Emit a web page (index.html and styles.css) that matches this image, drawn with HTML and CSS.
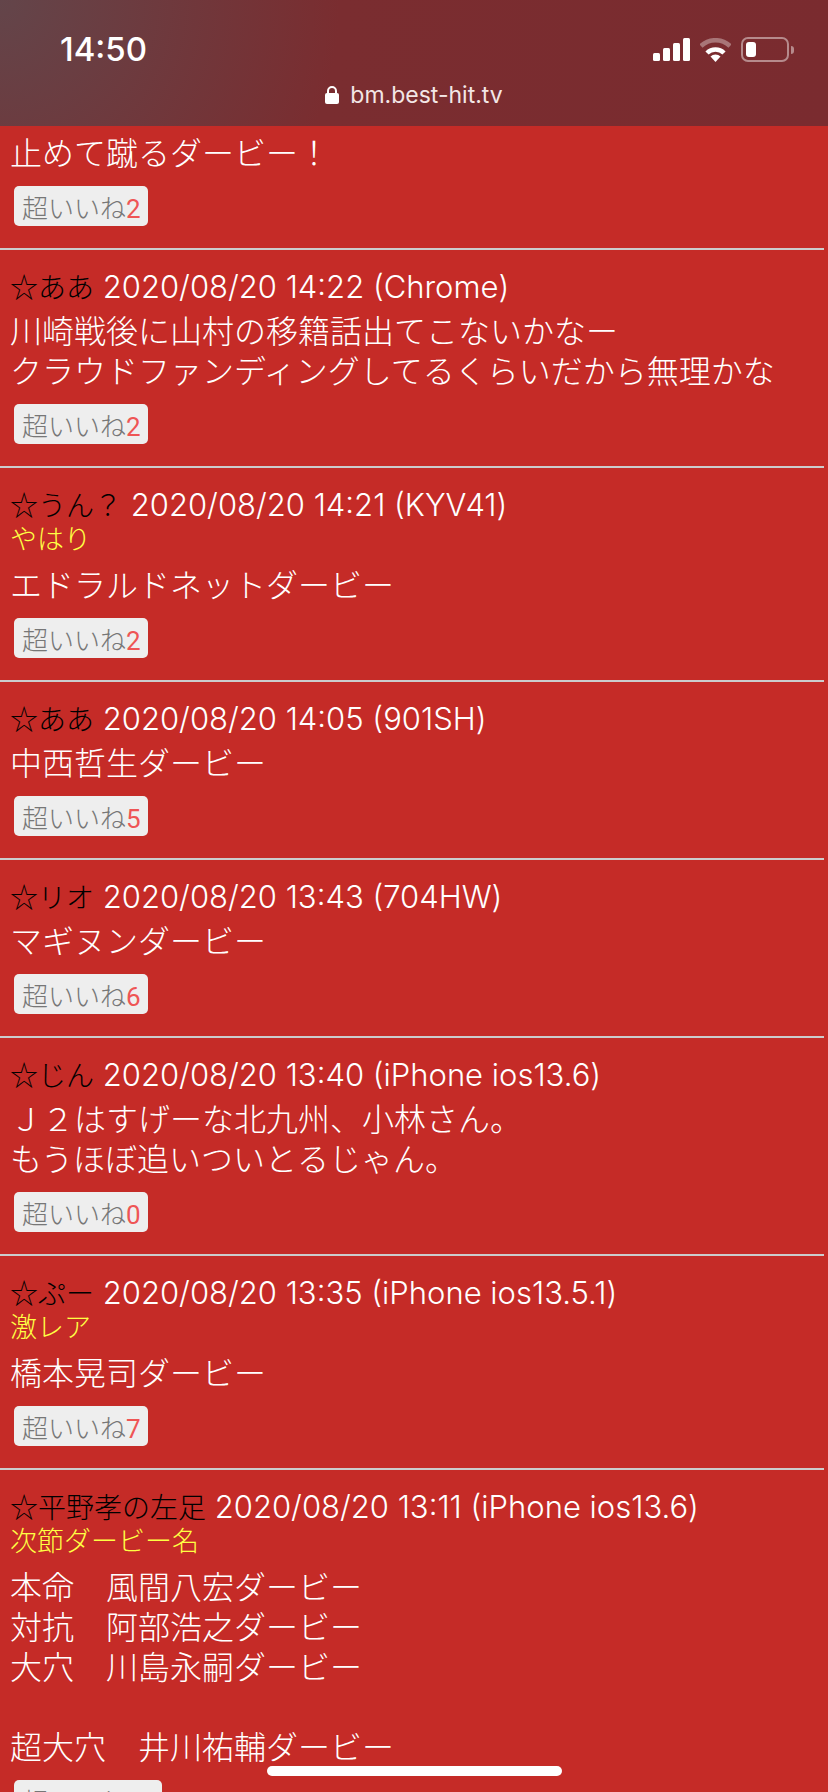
FILE: index.html
```html
<!DOCTYPE html>
<html lang="ja">

<head>
    <meta charset="UTF-8">
    <meta name="viewport" content="width=device-width, initial-scale=1.0">
    <title>bm.best-hit.tv</title>
    <link rel="stylesheet" href="styles.css">
</head>

<body>
    <header class="topbar">
        <div class="status">
            <span class="time">14:50</span>
            <div class="status-icons">
                <svg class="signal" width="37" height="23" viewBox="0 0 37 23">
                    <rect x="0" y="15" width="7" height="8" rx="1.5" />
                    <rect x="10" y="10" width="7" height="13" rx="1.5" />
                    <rect x="20" y="5" width="7" height="18" rx="1.5" />
                    <rect x="30" y="0" width="7" height="23" rx="1.5" />
                </svg>
                <svg class="wifi" width="31" height="24" viewBox="0 0 31 24">
                    <path d="M1 8 A21 21 0 0 1 30 8" fill="none" stroke="#fff" stroke-opacity=".35" stroke-width="4.5" />
                    <path d="M7 15 A12 12 0 0 1 24 15" fill="none" stroke="#fff" stroke-width="4.5" />
                    <path d="M15.5 24 L10.5 18.6 A7 7 0 0 1 20.5 18.6 Z" fill="#fff" />
                </svg>
                <div class="battery">
                    <div class="battery-body"><div class="battery-level"></div></div>
                    <div class="battery-nub"></div>
                </div>
            </div>
        </div>
        <div class="address">
            <svg class="lock" width="14" height="18" viewBox="0 0 14 18">
                <path d="M3 8 V5 a4 4 0 0 1 8 0 V8" fill="none" stroke="#fff" stroke-width="2" />
                <rect x="0" y="7" width="14" height="11" rx="2" fill="#fff" />
            </svg>
            <span>bm.best-hit.tv</span>
        </div>
    </header>

    <main>
        <div class="item item-cut">
            <p class="comment">止めて蹴るダービー！</p>
            <button class="like">超いいね<span class="count">2</span></button>
        </div>
        <hr>
        <div class="item">
            <p class="meta"><span class="name">☆ああ</span> 2020/08/20 14:22 (Chrome)</p>
            <p class="comment">川崎戦後に山村の移籍話出てこないかなー<br>クラウドファンディングしてるくらいだから無理かな</p>
            <button class="like">超いいね<span class="count">2</span></button>
        </div>
        <hr>
        <div class="item">
            <p class="meta"><span class="name">☆うん？</span> 2020/08/20 14:21 (KYV41)</p>
            <p class="title">やはり</p>
            <p class="comment">エドラルドネットダービー</p>
            <button class="like">超いいね<span class="count">2</span></button>
        </div>
        <hr>
        <div class="item">
            <p class="meta"><span class="name">☆ああ</span> 2020/08/20 14:05 (901SH)</p>
            <p class="comment">中西哲生ダービー</p>
            <button class="like">超いいね<span class="count">5</span></button>
        </div>
        <hr>
        <div class="item">
            <p class="meta"><span class="name">☆リオ</span> 2020/08/20 13:43 (704HW)</p>
            <p class="comment">マギヌンダービー</p>
            <button class="like">超いいね<span class="count">6</span></button>
        </div>
        <hr>
        <div class="item">
            <p class="meta"><span class="name">☆じん</span> 2020/08/20 13:40 (iPhone ios13.6)</p>
            <p class="comment">Ｊ２はすげーな北九州、小林さん。<br>もうほぼ追いついとるじゃん。</p>
            <button class="like">超いいね<span class="count">0</span></button>
        </div>
        <hr>
        <div class="item">
            <p class="meta"><span class="name">☆ぷー</span> 2020/08/20 13:35 (iPhone ios13.5.1)</p>
            <p class="title">激レア</p>
            <p class="comment">橋本晃司ダービー</p>
            <button class="like">超いいね<span class="count">7</span></button>
        </div>
        <hr>
        <div class="item">
            <p class="meta"><span class="name">☆平野孝の左足</span> 2020/08/20 13:11 (iPhone ios13.6)</p>
            <p class="title">次節ダービー名</p>
            <p class="comment">本命　風間八宏ダービー<br>対抗　阿部浩之ダービー<br>大穴　川島永嗣ダービー<br><br>超大穴　井川祐輔ダービー</p>
            <button class="like">超いいね<span class="count">10</span></button>
        </div>
    </main>

    <div class="home-bar"></div>
</body>

</html>
```

FILE: styles.css
```css
* {
    box-sizing: border-box;
}

html,
body {
    margin: 0;
    height: 1792px;
    overflow: hidden;
}

body {
    position: relative;
    background-color: #c52b27;
    color: #fff;
    font-family: Roboto, "Noto Sans CJK JP", sans-serif;
    font-weight: 300;
}

.topbar {
    height: 126px;
    background: radial-gradient(circle at 0 0, #63454a 0, #7a2d30 340px, #7a2b2f 100%);
}

.status {
    display: flex;
    justify-content: space-between;
    align-items: center;
    padding: 37px 34px 0 60px;
}

.time {
    font-family: Inter, sans-serif;
    font-size: 33px;
    font-weight: 500;
    line-height: 25px;
}

.status-icons {
    display: flex;
    align-items: center;
    gap: 10px;
}

.signal {
    fill: #fff;
}

.battery {
    display: flex;
    align-items: center;
    gap: 2px;
}

.battery-body {
    width: 48px;
    height: 25px;
    padding: 3px;
    border: 2px solid rgba(255, 255, 255, 0.45);
    border-radius: 7px;
}

.battery-level {
    width: 10px;
    height: 100%;
    background-color: #fff;
    border-radius: 3px;
}

.battery-nub {
    width: 3px;
    height: 8px;
    background-color: rgba(255, 255, 255, 0.45);
    border-radius: 0 3px 3px 0;
}

.address {
    display: flex;
    justify-content: center;
    align-items: center;
    gap: 11px;
    margin-top: 19px;
    color: #f3e6e6;
    font-family: Inter, sans-serif;
    font-size: 23px;
    font-weight: 400;
    line-height: 28px;
}

hr {
    width: 824px;
    height: 2px;
    margin: 0;
    border: 0;
    background-color: #ccc;
}

.item {
    padding: 20px 10px 22px;
}

.item-cut {
    padding-top: 8px;
}

.meta {
    height: 34px;
    margin: 0;
    font-family: Inter, "Noto Sans CJK JP", sans-serif;
    font-size: 31px;
    line-height: 33px;
}

.name {
    color: #000;
    font-family: "Noto Sans CJK JP", sans-serif;
    font-size: 28px;
    line-height: 1;
}

.title {
    margin: 0;
    color: #ff4;
    font-size: 27px;
    line-height: 36px;
}

.comment {
    margin: 8px 0 0;
    font-size: 32px;
    line-height: 40px;
}

.item-cut .comment {
    margin-top: 0;
}

.like {
    display: block;
    height: 40px;
    margin: 12px 0 0 4px;
    padding: 0 7px 0 8px;
    border: 0;
    border-radius: 5px;
    background-color: #eee;
    color: #777;
    font-family: inherit;
    font-size: 26px;
    font-weight: 300;
}

.count {
    color: #e55;
    font-weight: 400;
}

.home-bar {
    position: absolute;
    left: 267px;
    top: 1766px;
    width: 295px;
    height: 10px;
    background-color: #fff;
    border-radius: 5px;
}
```
